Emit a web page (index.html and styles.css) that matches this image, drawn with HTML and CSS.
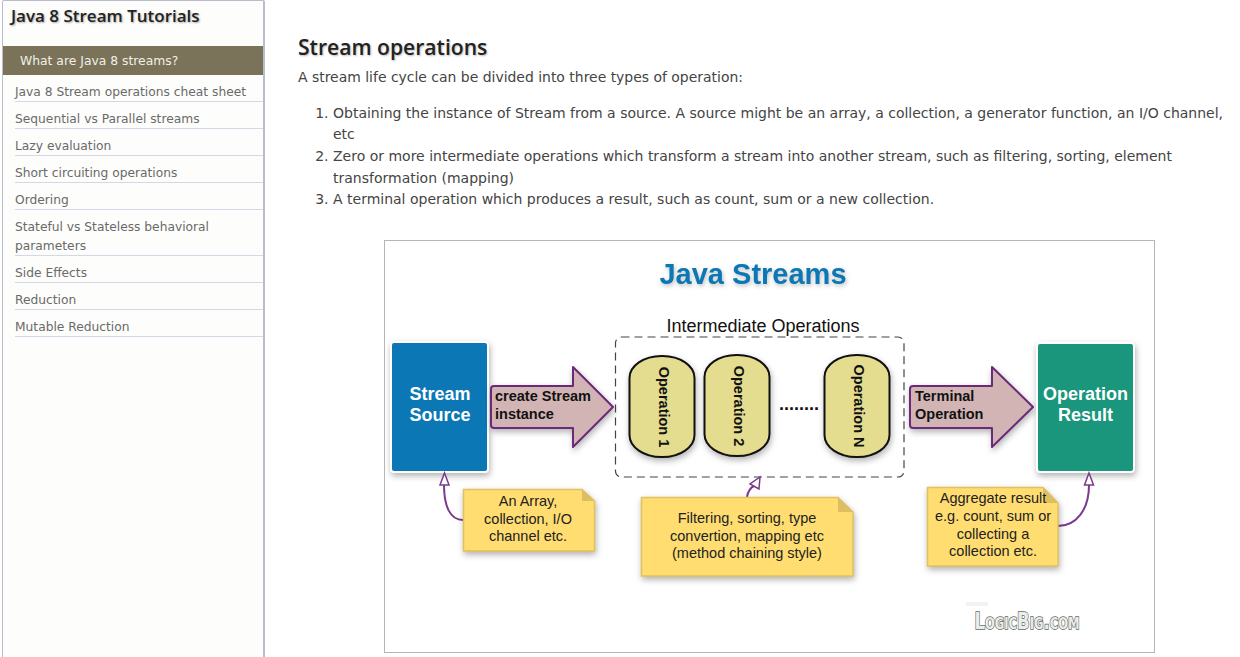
FILE: index.html
```html
<!DOCTYPE html>
<html lang="en">

<head>
    <meta charset="UTF-8">
    <title>Java 8 Stream Tutorials</title>
    <link rel="stylesheet" href="styles.css">
</head>

<body>

    <div class="sidebar">
        <div class="side-title">Java 8 Stream Tutorials</div>
        <div class="side-active">What are Java 8 streams?</div>
        <ul class="side-menu">
            <li>Java 8 Stream operations cheat sheet</li>
            <li>Sequential vs Parallel streams</li>
            <li>Lazy evaluation</li>
            <li>Short circuiting operations</li>
            <li>Ordering</li>
            <li class="two-line">Stateful vs Stateless behavioral parameters</li>
            <li>Side Effects</li>
            <li>Reduction</li>
            <li>Mutable Reduction</li>
        </ul>
    </div>

    <div class="content">
        <h2>Stream operations</h2>
        <p class="intro">A stream life cycle can be divided into three types of operation:</p>
        <ol class="steps">
            <li>Obtaining the instance of Stream from a source. A source might be an array, a collection, a generator function, an I/O channel, etc</li>
            <li>Zero or more intermediate operations which transform a stream into another stream, such as filtering, sorting, element transformation (mapping)</li>
            <li>A terminal operation which produces a result, such as count, sum or a new collection.</li>
        </ol>

        <div class="figure">
            <!-- viewBox uses page coordinates so the numbers line up with the screenshot -->
            <svg class="diagram" viewBox="385 241 769 411" width="769" height="411">
                <text class="d-title" x="753" y="284">Java Streams</text>

                <text class="d-label" x="763" y="332">Intermediate Operations</text>
                <rect class="d-dashed" x="615.5" y="337" width="288.500" height="140" rx="6"></rect>

                <rect class="d-source" x="391" y="342" width="97" height="130" rx="3"></rect>
                <text class="d-box-text" x="440" y="400">Stream</text>
                <text class="d-box-text" x="440" y="421">Source</text>

                <path class="d-arrow" d="M494 386H573V367L613 407L573 447V428H494Q491 428 491 425V389Q491 386 494 386Z"></path>
                <text class="d-arrow-text" x="495" y="401">create Stream</text>
                <text class="d-arrow-text" x="495" y="419">instance</text>

                <rect class="d-op" x="629.5" y="356" width="65" height="101" rx="32" ry="22"></rect>
                <text class="d-op-text" transform="translate(659 407) rotate(90)">Operation 1</text>
                <rect class="d-op" x="704.5" y="355" width="65" height="101" rx="32" ry="22"></rect>
                <text class="d-op-text" transform="translate(734 406) rotate(90)">Operation 2</text>
                <text class="d-dots" x="799" y="410">........</text>
                <rect class="d-op" x="824.5" y="355" width="65" height="102" rx="32" ry="22"></rect>
                <text class="d-op-text" transform="translate(854 406) rotate(90)">Operation N</text>

                <path class="d-arrow" d="M913 386H992V367L1033 407L992 447V428H913Q910 428 910 425V389Q910 386 913 386Z"></path>
                <text class="d-arrow-text" x="915" y="401">Terminal</text>
                <text class="d-arrow-text" x="915" y="419">Operation</text>

                <rect class="d-result" x="1037" y="343" width="97" height="129" rx="3"></rect>
                <text class="d-box-text" x="1085.500" y="400">Operation</text>
                <text class="d-box-text" x="1085.500" y="421">Result</text>

                <path class="d-link" d="M463 520C450 520 444 506 444 485"></path>
                <path class="d-head" d="M444.500 473L449 485H440Z"></path>
                <path class="d-note" d="M463.500 489.500H582L594.500 501V551H463.500Z"></path>
                <path class="d-fold" d="M582 489.500L594.500 501H582Z"></path>
                <text class="d-note-text" x="528" y="506">An Array,</text>
                <text class="d-note-text" x="528" y="524">collection, I/O</text>
                <text class="d-note-text" x="528" y="541">channel etc.</text>

                <path class="d-link" d="M747 497C748 491 750 488 754 486"></path>
                <path class="d-head" d="M760 477L759 489L750 484Z"></path>
                <path class="d-note" d="M641.500 497.500H838L853 512V576H641.500Z"></path>
                <path class="d-fold" d="M838 497.500L853 512H838Z"></path>
                <text class="d-note-text" x="747" y="523">Filtering, sorting, type</text>
                <text class="d-note-text" x="747" y="541">convertion, mapping etc</text>
                <text class="d-note-text" x="747" y="558">(method chaining style)</text>

                <path class="d-link" d="M1058 526C1076 526 1089 510 1089 485"></path>
                <path class="d-head" d="M1089 473L1093.500 485H1084.500Z"></path>
                <path class="d-note" d="M927.500 487.500H1043L1058 503V566H927.500Z"></path>
                <path class="d-fold" d="M1043 487.500L1058 503H1043Z"></path>
                <text class="d-note-text" x="993" y="503">Aggregate result</text>
                <text class="d-note-text" x="993" y="521">e.g. count, sum or</text>
                <text class="d-note-text" x="993" y="539">collecting a</text>
                <text class="d-note-text" x="993" y="556">collection etc.</text>

                <rect class="d-smudge" x="966" y="602" width="22" height="4"></rect>
                <text class="d-logo" x="1027" y="629" textLength="105" lengthAdjust="spacingAndGlyphs">LogicBig.com</text>
            </svg>
        </div>
    </div>

</body>

</html>
```

FILE: styles.css
```css
body {
    font-family: "DejaVu Sans", Verdana, sans-serif;
    margin: 0;
    padding: 0;
    height: 657px;
    overflow: hidden;
    display: flex;
    background-color: #fff;
    color: #444;
}

.sidebar {
    width: 260px;
    height: 657px;
    margin-left: 2px;
    flex-shrink: 0;
    background-color: #fdfdfb;
    border: 1px solid #b9bccb;
    border-bottom: none;
    border-right-width: 2px;
    border-radius: 2px 2px 0 0;
}

.side-title {
    height: 45px;
    padding: 5px 0 0 8px;
    box-sizing: border-box;
    font-family: "Open Sans", sans-serif;
    font-size: 17px;
    font-weight: 600;
    line-height: 20px;
    color: #222;
    text-shadow: 1px 1px 2px #aaa;
}

.side-active {
    height: 29px;
    padding-left: 17px;
    background-color: #7a7259;
    color: #f2f0e6;
    font-size: 12.35px;
    line-height: 31px;
}

.side-menu {
    list-style: none;
    margin: 0 0 0 12px;
    padding: 0;
}

.side-menu li {
    padding: 8px 0 0;
    border-bottom: 1px solid #d5d6e6;
    font-size: 12.25px;
    line-height: 18px;
    color: #6a6a6a;
}

.side-menu .two-line {
    line-height: 18.5px;
}

.content {
    flex: 1;
    padding: 0 0 0 33px;
    min-width: 0;
}

h2 {
    margin: 33px 0 0;
    font-family: "Open Sans", sans-serif;
    font-size: 21.1px;
    font-weight: 600;
    line-height: 28px;
    color: #222;
    text-shadow: 1px 1px 2px #bbb;
}

.intro {
    margin: 6px 0 0;
    font-size: 13.95px;
    line-height: 21.6px;
}

.steps {
    margin: 14px 0 0;
    padding-left: 35px;
    font-size: 14px;
    line-height: 21.7px;
}

.figure {
    margin-top: 29px;
    display: flex;
    justify-content: center;
}

.diagram {
    display: block;
    border: 1px solid #b5b5b5;
    background-color: #fff;
}

/* diagram parts */
.d-title {
    font: bold 29px "Liberation Sans", sans-serif;
    fill: #0b77b5;
    text-anchor: middle;
    filter: drop-shadow(1px 2px 2px rgba(0, 0, 0, 0.25));
}

.d-label {
    font: 18px "Liberation Sans", sans-serif;
    fill: #111;
    text-anchor: middle;
}

.d-dashed {
    fill: none;
    stroke: #444;
    stroke-width: 1.2;
    stroke-dasharray: 8 5;
}

.d-source,
.d-result,
.d-op,
.d-arrow,
.d-note {
    filter: drop-shadow(1px 3px 3px rgba(0, 0, 0, 0.3));
}

.d-source {
    fill: #0b77b5;
    stroke: #fff;
    stroke-width: 2;
}

.d-result {
    fill: #1a967c;
    stroke: #fff;
    stroke-width: 2;
}

.d-box-text {
    font: bold 18px "Liberation Sans", sans-serif;
    fill: #fff;
    text-anchor: middle;
}

.d-arrow {
    fill: #d2b4b4;
    stroke: #6a2a78;
    stroke-width: 2;
    stroke-linejoin: round;
}

.d-arrow-text {
    font: bold 14.500px "Liberation Sans", sans-serif;
    fill: #111;
}

.d-op {
    fill: #e4dc8f;
    stroke: #111;
    stroke-width: 2;
}

.d-op-text {
    font: bold 14.500px "Liberation Sans", sans-serif;
    fill: #111;
    text-anchor: middle;
}

.d-dots {
    font: bold 18px "Liberation Sans", sans-serif;
    fill: #111;
    text-anchor: middle;
}

.d-note {
    fill: #ffdd71;
    stroke: #e2c15f;
    stroke-width: 1.5;
}

.d-fold {
    fill: #dcbf60;
}

.d-note-text {
    font: 14.500px "Liberation Sans", sans-serif;
    fill: #222;
    text-anchor: middle;
}

.d-link {
    fill: none;
    stroke: #7b3a8e;
    stroke-width: 2;
}

.d-head {
    fill: #fff;
    stroke: #7b3a8e;
    stroke-width: 1.5;
}

.d-smudge {
    fill: #f2f2f2;
}

.d-logo {
    font: bold 23px "DejaVu Sans", sans-serif;
    font-variant: small-caps;
    fill: #ececec;
    stroke: #5f6a5f;
    stroke-width: 1.6;
    paint-order: stroke;
    text-anchor: middle;
}
```
